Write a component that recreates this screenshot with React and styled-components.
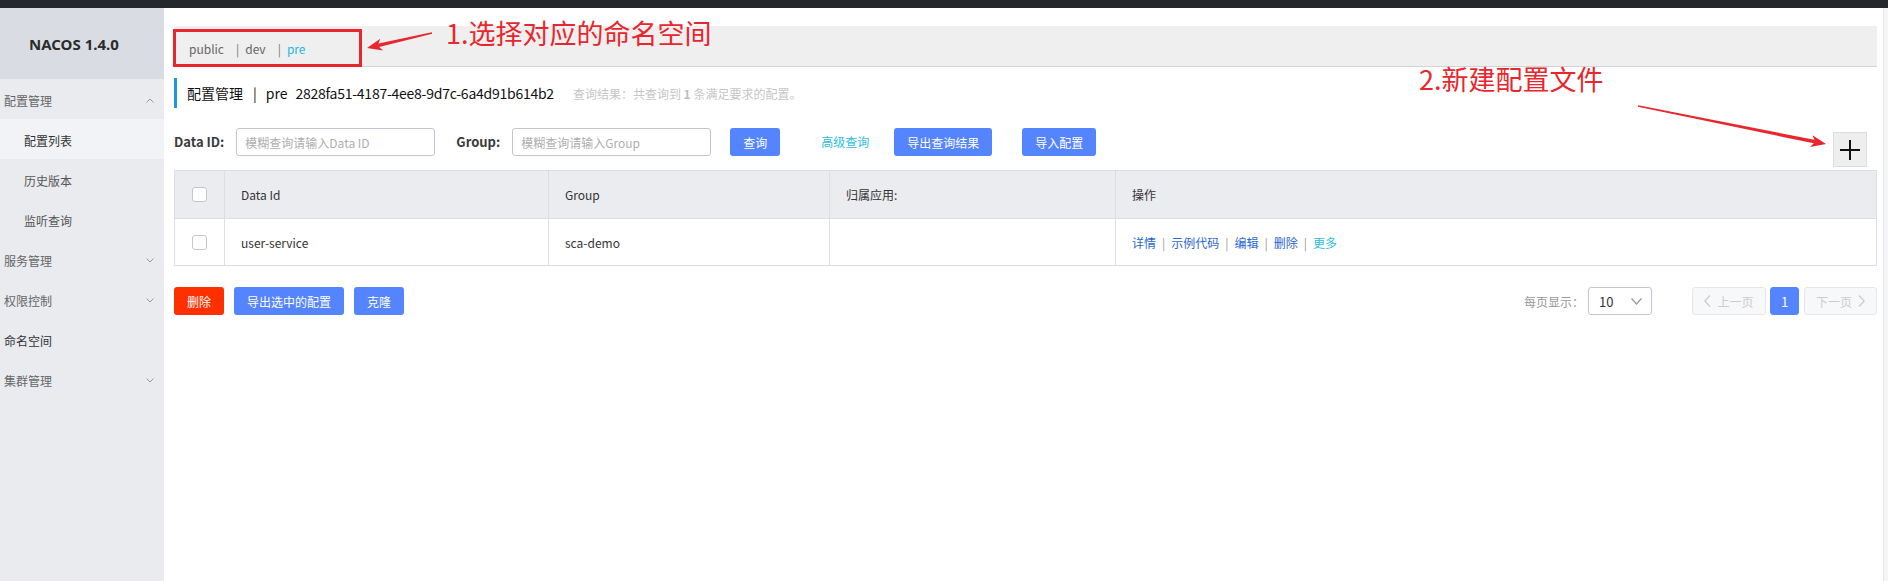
import React from 'react';
import styled, { createGlobalStyle } from 'styled-components';

const GlobalStyle = createGlobalStyle`
  html, body { margin: 0; padding: 0; background: #fff; }
  body {
    font-family: "Noto Sans CJK SC", "Noto Sans", sans-serif;
    font-size: 12px;
    color: #333;
  }
  * { box-sizing: border-box; }
`;

const Page = styled.div`
  position: relative;
  width: 1888px;
  height: 581px;
  overflow: hidden;
  display: flex;
  flex-direction: column;
`;

const TopBar = styled.div`
  height: 8px;
  flex: none;
  background: #24272b;
`;

const Body = styled.div`
  flex: 1;
  display: flex;
  min-height: 0;
`;

const Sidebar = styled.aside`
  width: 164px;
  flex: none;
  background: #e9ebef;
  display: flex;
  flex-direction: column;
`;

const Brand = styled.div`
  height: 71px;
  background: #d9dde3;
  display: flex;
  align-items: center;
  padding-left: 29px;
  font-family: "Noto Sans", sans-serif;
  font-weight: 700;
  font-size: 15px;
  color: #2b2b2b;
`;

const MenuItem = styled.div`
  height: 40px;
  display: flex;
  align-items: center;
  padding: 3px 10px 0 ${p => (p.$sub ? 24 : 4)}px;
  background: ${p => (p.$active ? '#f1f3f6' : 'transparent')};
  color: ${p => p.$color || '#666'};
  font-size: 12px;
`;

const Chevron = styled.svg`
  margin-left: auto;
  width: 8px;
  height: 5px;
`;

const Main = styled.main`
  flex: 1;
  min-width: 0;
  padding: 18px 6px 0 10px;
  display: flex;
  flex-direction: column;
`;

const ScrollStrip = styled.div`
  width: 5px;
  flex: none;
  background: #f4f5f7;
  border-left: 1px solid #e8e8ea;
`;

const NamespaceBar = styled.div`
  height: 41px;
  flex: none;
  background: #efefef;
  border-bottom: 1px solid #d3d3d3;
  display: flex;
  align-items: center;
  padding: 4px 0 0 15px;
  font-size: 12px;
`;

const NsItem = styled.span`
  color: ${p => (p.$active ? '#29b6e3' : '#666')};
`;

const NsSep = styled.span`
  margin: 0 6px 0 12px;
  color: #777;
`;

const TitleRow = styled.div`
  margin-top: 11px;
  height: 30px;
  flex: none;
  border-left: 3px solid #1b9ad7;
  padding-left: 10px;
  display: flex;
  align-items: center;
  font-size: 14px;
  color: #111;
`;

const TitleSep = styled.span`
  margin: 0 9px 0 10px;
`;

const Uuid = styled.span`
  margin-left: 8px;
  letter-spacing: -0.25px;
`;

const ResultTip = styled.span`
  margin-left: 19px;
  font-size: 12px;
  color: #c6c6c6;
  strong { font-weight: 700; color: #bdbdbd; }
`;

const SearchRow = styled.div`
  margin-top: 20px;
  margin-bottom: 3px;
  display: flex;
  align-items: flex-start;
`;

const Label = styled.label`
  height: 28px;
  line-height: 28px;
  font-weight: 700;
  font-size: 13px;
  color: #3a3a3a;
  margin-left: ${p => p.$ml || 0}px;
  margin-right: 12px;
`;

const Input = styled.input`
  width: 199px;
  height: 28px;
  border: 1px solid #c4c6cf;
  border-radius: 3px;
  padding: 0 8px;
  font-family: inherit;
  font-size: 12px;
  color: #333;
  outline: none;
  &::placeholder { color: #aeaeae; }
`;

const Button = styled.button`
  height: 28px;
  padding: 0 13px;
  border: none;
  border-radius: 3px;
  background: ${p => (p.$danger ? '#ff3000' : '#5584ff')};
  color: #fff;
  font-family: inherit;
  font-size: 12px;
  margin-left: ${p => p.$ml || 0}px;
  cursor: pointer;
`;

const TextLink = styled.span`
  height: 28px;
  line-height: 28px;
  color: #2bbde0;
  font-size: 12px;
  margin-left: ${p => p.$ml || 0}px;
`;

const PlusButton = styled.div`
  margin-left: auto;
  margin-right: 10px;
  margin-top: 4px;
  width: 34px;
  height: 35px;
  background: #eeeeee;
  border: 1px solid #dddddd;
  display: flex;
  align-items: center;
  justify-content: center;
`;

const Table = styled.div`
  border: 1px solid #dcdee3;
`;

const Row = styled.div`
  display: grid;
  grid-template-columns: 50px 324px 281px 286px 1fr;
  height: 47px;
  background: ${p => (p.$head ? '#ebecf0' : '#fff')};
  & + & { border-top: 1px solid #dcdee3; }
`;

const Cell = styled.div`
  display: flex;
  align-items: center;
  justify-content: ${p => (p.$center ? 'center' : 'flex-start')};
  padding: 0 16px;
  font-size: 12px;
  color: #333;
  border-right: 1px solid #dcdee3;
  &:last-child { border-right: none; }
`;

const Checkbox = styled.span`
  width: 15px;
  height: 15px;
  flex: none;
  border: 1px solid #c4c6cf;
  border-radius: 3px;
  background: #fff;
`;

const ActionLink = styled.a`
  color: ${p => (p.$more ? '#2bbde0' : '#2a67d1')};
  text-decoration: none;
`;

const ActionSep = styled.span`
  margin: 0 6px;
  color: #999;
`;

const Footer = styled.div`
  margin-top: 21px;
  display: flex;
  align-items: center;
`;

const ButtonGroup = styled.div`
  display: flex;
  gap: 10px;
`;

const Pagination = styled.div`
  margin-left: auto;
  display: flex;
  align-items: center;
`;

const SizeLabel = styled.span`
  color: #999;
  font-size: 12px;
  margin-right: 4px;
`;

const Select = styled.div`
  width: 64px;
  height: 28px;
  border: 1px solid #c4c6cf;
  border-radius: 3px;
  padding: 0 9px 0 10px;
  display: flex;
  align-items: center;
  justify-content: space-between;
  font-size: 13px;
  color: #333;
`;

const PageBtn = styled.div`
  width: ${p => p.$w}px;
  height: 28px;
  margin-left: ${p => p.$ml}px;
  border: 1px solid ${p => (p.$current ? '#5584ff' : '#e6e7eb')};
  background: ${p => (p.$current ? '#5584ff' : '#f7f8fa')};
  color: ${p => (p.$current ? '#fff' : '#cccccc')};
  border-radius: 3px;
  display: flex;
  align-items: center;
  justify-content: center;
  gap: 6px;
  font-size: ${p => (p.$current ? 13 : 12)}px;
`;

const Overlay = styled.div`
  position: absolute;
  inset: 0;
  pointer-events: none;
`;

const OverlaySvg = styled.svg`
  position: absolute;
  left: 0;
  top: 0;
`;

const NoteText = styled.span`
  position: absolute;
  left: ${p => p.$x}px;
  top: ${p => p.$y}px;
  font-family: "Noto Sans CJK SC", sans-serif;
  font-size: 27px;
  line-height: 27px;
  color: #e8262d;
  white-space: nowrap;
`;

const RED = '#e8262d';

function Arrow({ x1, y1, x2, y2 }) {
  const dx = x2 - x1;
  const dy = y2 - y1;
  const len = Math.hypot(dx, dy);
  const ux = dx / len;
  const uy = dy / len;
  const px = -uy;
  const py = ux;
  const headLen = 15;
  const headW = 6;
  const bx = x2 - ux * headLen;
  const by = y2 - uy * headLen;
  const nx = x2 - ux * (headLen - 4);
  const ny = y2 - uy * (headLen - 4);
  const shaft = [
    [x1 + px * 0.8, y1 + py * 0.8],
    [nx + px * 1.8, ny + py * 1.8],
    [nx - px * 1.8, ny - py * 1.8],
    [x1 - px * 0.8, y1 - py * 0.8],
  ];
  const head = [
    [x2, y2],
    [bx + px * headW, by + py * headW],
    [nx, ny],
    [bx - px * headW, by - py * headW],
  ];
  const pts = a => a.map(p => p.join(',')).join(' ');
  return (
    <g fill={RED}>
      <polygon points={pts(shaft)} />
      <polygon points={pts(head)} />
    </g>
  );
}

function ChevronIcon({ up }) {
  return (
    <Chevron viewBox="0 0 8 5">
      <polyline
        points={up ? '0.5,4.5 4,1 7.5,4.5' : '0.5,0.5 4,4 7.5,0.5'}
        fill="none"
        stroke="#999"
        strokeWidth="1"
      />
    </Chevron>
  );
}

const menu = [
  { label: '配置管理', chevron: 'up' },
  { label: '配置列表', sub: true, active: true, color: '#333' },
  { label: '历史版本', sub: true, color: '#555' },
  { label: '监听查询', sub: true, color: '#555' },
  { label: '服务管理', chevron: 'down' },
  { label: '权限控制', chevron: 'down' },
  { label: '命名空间', color: '#333' },
  { label: '集群管理', chevron: 'down' },
];

export default function App() {
  return (
    <>
      <GlobalStyle />
      <Page>
        <TopBar />
        <Body>
          <Sidebar>
            <Brand>NACOS 1.4.0</Brand>
            {menu.map(m => (
              <MenuItem key={m.label} $sub={m.sub} $active={m.active} $color={m.color}>
                {m.label}
                {m.chevron && <ChevronIcon up={m.chevron === 'up'} />}
              </MenuItem>
            ))}
          </Sidebar>
          <Main>
            <NamespaceBar>
              <NsItem>public</NsItem>
              <NsSep>|</NsSep>
              <NsItem>dev</NsItem>
              <NsSep>|</NsSep>
              <NsItem $active>pre</NsItem>
            </NamespaceBar>
            <TitleRow>
              <span>配置管理</span>
              <TitleSep>|</TitleSep>
              <span>pre</span>
              <Uuid>2828fa51-4187-4ee8-9d7c-6a4d91b614b2</Uuid>
              <ResultTip>
                查询结果：共查询到 <strong>1</strong> 条满足要求的配置。
              </ResultTip>
            </TitleRow>
            <SearchRow>
              <Label>Data ID:</Label>
              <Input placeholder="模糊查询请输入Data ID" />
              <Label $ml={21}>Group:</Label>
              <Input placeholder="模糊查询请输入Group" />
              <Button $ml={19}>查询</Button>
              <TextLink $ml={41}>高级查询</TextLink>
              <Button $ml={25}>导出查询结果</Button>
              <Button $ml={30}>导入配置</Button>
              <PlusButton>
                <svg width="20" height="20" viewBox="0 0 20 20">
                  <path d="M0 10H20M10 0V20" stroke="#111" strokeWidth="2" />
                </svg>
              </PlusButton>
            </SearchRow>
            <Table>
              <Row $head>
                <Cell $center><Checkbox /></Cell>
                <Cell>Data Id</Cell>
                <Cell>Group</Cell>
                <Cell>归属应用:</Cell>
                <Cell>操作</Cell>
              </Row>
              <Row>
                <Cell $center><Checkbox /></Cell>
                <Cell>user-service</Cell>
                <Cell>sca-demo</Cell>
                <Cell />
                <Cell>
                  <ActionLink>详情</ActionLink>
                  <ActionSep>|</ActionSep>
                  <ActionLink>示例代码</ActionLink>
                  <ActionSep>|</ActionSep>
                  <ActionLink>编辑</ActionLink>
                  <ActionSep>|</ActionSep>
                  <ActionLink>删除</ActionLink>
                  <ActionSep>|</ActionSep>
                  <ActionLink $more>更多</ActionLink>
                </Cell>
              </Row>
            </Table>
            <Footer>
              <ButtonGroup>
                <Button $danger>删除</Button>
                <Button>导出选中的配置</Button>
                <Button>克隆</Button>
              </ButtonGroup>
              <Pagination>
                <SizeLabel>每页显示：</SizeLabel>
                <Select>
                  <span>10</span>
                  <svg width="11" height="7" viewBox="0 0 11 7">
                    <polyline points="0.5,0.5 5.5,6 10.5,0.5" fill="none" stroke="#999" strokeWidth="1.2" />
                  </svg>
                </Select>
                <PageBtn $w={74} $ml={40}>
                  <svg width="7" height="12" viewBox="0 0 7 12">
                    <polyline points="6,0.5 0.8,6 6,11.5" fill="none" stroke="#ccc" strokeWidth="1.3" />
                  </svg>
                  <span>上一页</span>
                </PageBtn>
                <PageBtn $w={29} $ml={4} $current>1</PageBtn>
                <PageBtn $w={73} $ml={5}>
                  <span>下一页</span>
                  <svg width="7" height="12" viewBox="0 0 7 12">
                    <polyline points="1,0.5 6.2,6 1,11.5" fill="none" stroke="#ccc" strokeWidth="1.3" />
                  </svg>
                </PageBtn>
              </Pagination>
            </Footer>
          </Main>
          <ScrollStrip />
        </Body>
        <Overlay>
          <OverlaySvg width="1888" height="581" viewBox="0 0 1888 581">
            <rect x="174.5" y="30.5" width="186" height="35" fill="none" stroke={RED} strokeWidth="3" />
            <Arrow x1={432} y1={33} x2={367} y2={48} />
            <Arrow x1={1638} y1={106} x2={1826} y2={144} />
          </OverlaySvg>
          <NoteText $x={446} $y={19}>1.选择对应的命名空间</NoteText>
          <NoteText $x={1419} $y={65}>2.新建配置文件</NoteText>
        </Overlay>
      </Page>
    </>
  );
}
